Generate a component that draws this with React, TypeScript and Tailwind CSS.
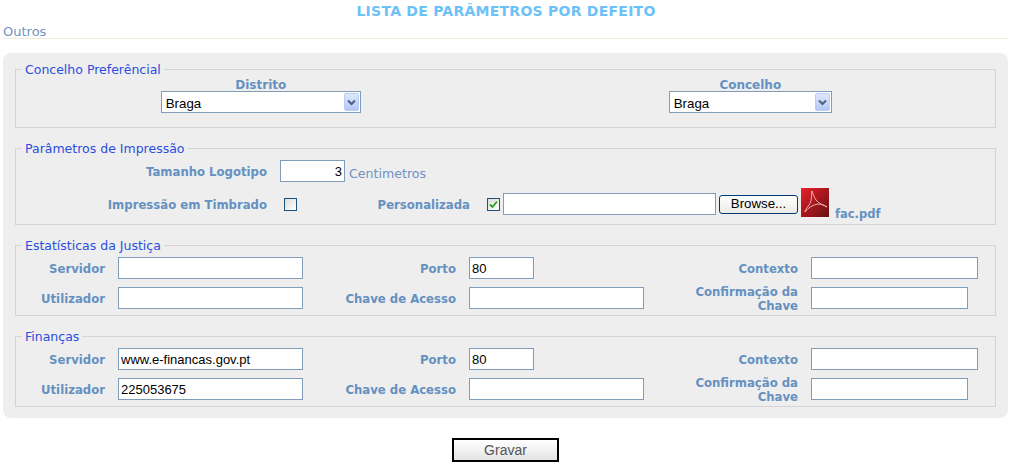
import React from 'react';

const LABEL = "text-right font-bold text-[11.7px] leading-[14px] text-[#6591c1] pt-[2px] pr-[13px]";
const INPUT = "block h-[22px] border border-[#7f9db9] bg-white px-[2px] text-[13px] text-black outline-none font-['Liberation_Sans',sans-serif]";

function Legend({ children }: { children: React.ReactNode }) {
  return <legend className="ml-[6px] px-[3px] text-[12.5px] leading-[16px] text-[#2a4ee0]"><span className="block translate-y-[1px]">{children}</span></legend>;
}

function FakeSelect({ width }: { width: string }) {
  return (
    <div className={`relative h-[22px] ${width}`}>
      <select className="block h-full w-full appearance-none border border-[#7f9db9] bg-white pl-[4px] pt-[2px] text-[13.3px] text-black outline-none font-['Liberation_Sans',sans-serif]" defaultValue="Braga">
        <option>Braga</option>
      </select>
      <span className="absolute right-[2px] top-[2px] flex h-[18px] w-[15px] items-center justify-center rounded-[2px] border border-[#b9cdf5] bg-gradient-to-b from-[#dfe8fc] to-[#b4c8f6]">
        <svg width="9" height="7" viewBox="0 0 9 7">
          <path d="M1 1.5 L4.5 5 L8 1.5" fill="none" stroke="#4d6185" strokeWidth="2" />
        </svg>
      </span>
    </div>
  );
}

function Check({ checked }: { checked?: boolean }) {
  return (
    <span className="relative block h-[13px] w-[13px] border border-[#1c5180] bg-gradient-to-br from-[#dcdcd7] to-white">
      {checked && (
        <svg className="absolute left-[1px] top-[1px]" width="9" height="9" viewBox="0 0 9 9">
          <path d="M1 4.5 L3.5 7 L8 1.5" fill="none" stroke="#21a121" strokeWidth="1.8" />
        </svg>
      )}
    </span>
  );
}

function PdfIcon() {
  return (
    <svg width="30" height="31" viewBox="0 0 30 31" className="block">
      <defs>
        <linearGradient id="pdf-bg" x1="0" y1="0" x2="1" y2="1">
          <stop offset="0%" stopColor="#e8202a" />
          <stop offset="50%" stopColor="#a8161c" />
          <stop offset="100%" stopColor="#641013" />
        </linearGradient>
      </defs>
      <rect x="0" y="0" width="30" height="31" fill="#f5eeee" />
      <rect x="1" y="1" width="28" height="29" fill="url(#pdf-bg)" />
      <path d="M12 4 C11 10 12 14 9 18 C7 21 5 23 5 25 C8 21 12 18 18 17 C21 17 24 18 27 20 C24 18 19 17 16 13 C14 10 13 7 12 4 Z" fill="none" stroke="#e8b4b4" strokeWidth="1" />
    </svg>
  );
}

function ServerFields({ server = '', user = '' }: { server?: string; user?: string }) {
  return (
    <div className="grid grid-cols-[102px_185px_166px_175px_167px_167px] grid-rows-[22px_22px] gap-y-[8px] pt-[4px] pb-[6px] items-center">
      <div className={LABEL}>Servidor</div>
      <input className={`${INPUT} w-[185px]`} defaultValue={server} />
      <div className={LABEL}>Porto</div>
      <input className={`${INPUT} w-[65px]`} defaultValue="80" />
      <div className={LABEL}>Contexto</div>
      <input className={`${INPUT} w-[167px]`} />
      <div className={LABEL}>Utilizador</div>
      <input className={`${INPUT} w-[185px]`} defaultValue={user} />
      <div className={LABEL}>Chave de Acesso</div>
      <input className={`${INPUT} w-[175px]`} />
      <div className={`${LABEL} pl-[45px]`}>Confirmação da Chave</div>
      <input className={`${INPUT} w-[157px]`} />
    </div>
  );
}

export default function App() {
  return (
    <div className="h-[473px] w-[1016px] overflow-hidden bg-white font-['DejaVu_Sans',sans-serif]">
      <h1 className="h-[23px] pt-[3px] pr-[4px] text-center text-[14px] tracking-[0.25px] leading-[16px] font-bold text-[#6cc2f7]">LISTA DE PARÂMETROS POR DEFEITO</h1>
      <div className="ml-[3px] w-[1005px] h-[16px] pt-[1px] border-b border-[#f1ebd9] text-[13px] leading-[16px] text-[#7392c4]">Outros</div>
      <div className="ml-[3px] mt-[14px] h-[365px] w-[1005px] rounded-[8px] bg-[#eeeeee] px-[12px] pt-[8px]">
        <fieldset className="h-[67px] border border-[#d4d4d4]">
          <Legend>Concelho Preferêncial</Legend>
          <div className="grid grid-cols-2">
            <div className="flex flex-col items-center">
              <div className="translate-y-[1px] font-bold text-[12px] leading-[14px] text-[#6591c1]">Distrito</div>
              <FakeSelect width="w-[200px]" />
            </div>
            <div className="flex flex-col items-center">
              <div className="translate-y-[1px] font-bold text-[12px] leading-[14px] text-[#6591c1]">Concelho</div>
              <FakeSelect width="w-[163px]" />
            </div>
          </div>
        </fieldset>

        <fieldset className="mt-[12px] h-[85px] border border-[#d4d4d4]">
          <Legend>Parâmetros de Impressão</Legend>
          <div className="flex h-[22px] mt-[4px] items-center">
            <div className={`${LABEL} w-[264px]`}>Tamanho Logotipo</div>
            <input className={`${INPUT} w-[65px] text-right`} defaultValue="3" />
            <span className="ml-[4px] mt-[7px] text-[12.6px] text-[#7392c4]">Centimetros</span>
          </div>
          <div className="flex h-[30px] mt-[7px] items-center">
            <div className={`${LABEL} w-[264px]`}>Impressão em Timbrado</div>
            <div className="ml-[4px] w-[169px]"><Check /></div>
            <div className={`${LABEL} w-[17px] whitespace-nowrap flex justify-end !pr-0`}>Personalizada</div>
            <div className="ml-[17px]"><Check checked /></div>
            <input className={`${INPUT} ml-[3px] h-[20px] w-[213px]`} />
            <button className="ml-[3px] h-[19px] w-[79px] rounded-[3px] border border-[#003c74] bg-gradient-to-b from-white to-[#ecebe5] text-[13.3px] leading-none text-black font-['Liberation_Sans',sans-serif]">Browse...</button>
            <div className="ml-[2px] mb-[4px]"><PdfIcon /></div>
            <span className="ml-[5px] mt-[20px] font-bold text-[11.5px] leading-[14px] text-[#6591c1]">fac.pdf</span>
          </div>
        </fieldset>

        <fieldset className="mt-[12px] border border-[#d4d4d4]">
          <Legend>Estatísticas da Justiça</Legend>
          <ServerFields />
        </fieldset>

        <fieldset className="mt-[12px] border border-[#d4d4d4]">
          <Legend>Finanças</Legend>
          <ServerFields server="www.e-financas.gov.pt" user="225053675" />
        </fieldset>
      </div>
      <div className="mt-[20px] pl-[452px]">
        <button className="block h-[24px] w-[107px] border-2 border-black bg-gradient-to-b from-white to-[#e4e4e4] text-[14px] text-[#555555] font-['Liberation_Sans',sans-serif]">Gravar</button>
      </div>
    </div>
  );
}
